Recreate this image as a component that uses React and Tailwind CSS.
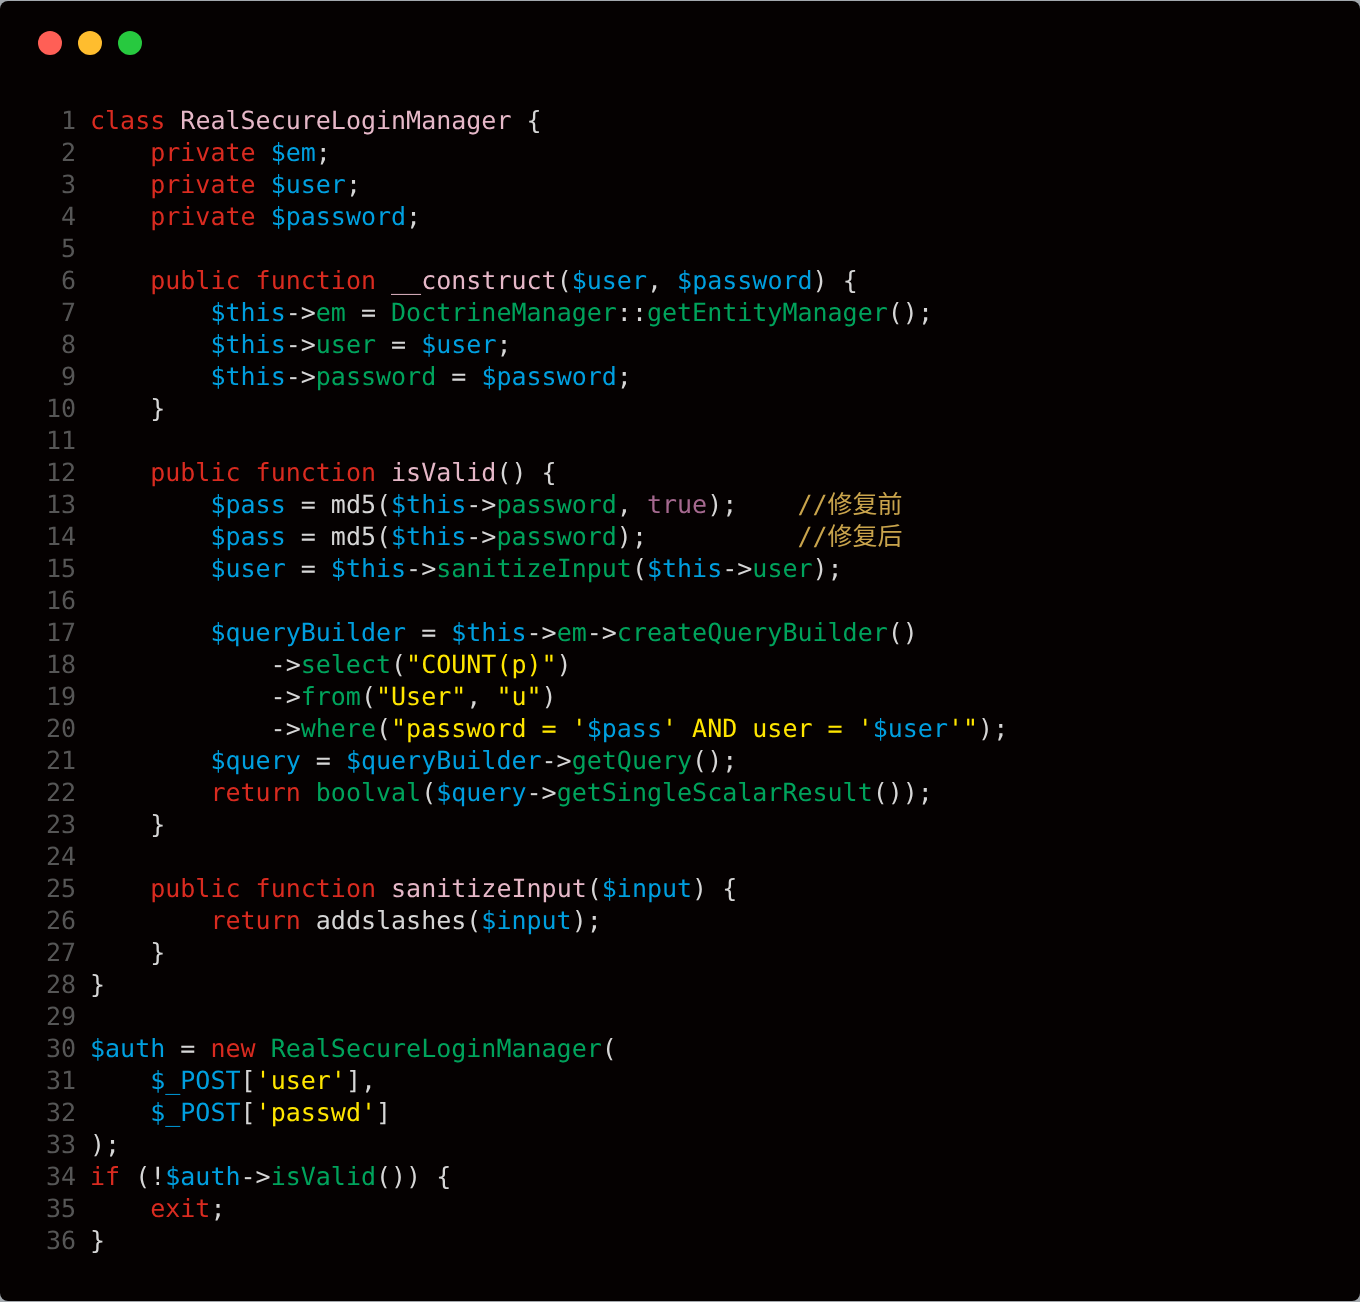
const K = "text-[#d92b20]";
const V = "text-[#009fdf]";
const F = "text-[#00a35c]";
const C = "text-[#e6b8c8]";
const S = "text-[#ffe600]";
const B = "text-[#a5698f]";
const M = "text-[#c9a44c]";
const P = "text-[#d6d6d6]";

const lines = [
  [[K, "class"], [P, " "], [C, "RealSecureLoginManager"], [P, " {"]],
  [[P, "    "], [K, "private"], [P, " "], [V, "$em"], [P, ";"]],
  [[P, "    "], [K, "private"], [P, " "], [V, "$user"], [P, ";"]],
  [[P, "    "], [K, "private"], [P, " "], [V, "$password"], [P, ";"]],
  [],
  [[P, "    "], [K, "public function"], [P, " "], [C, "__construct"], [P, "("], [V, "$user"], [P, ", "], [V, "$password"], [P, ") {"]],
  [[P, "        "], [V, "$this"], [P, "->"], [F, "em"], [P, " = "], [F, "DoctrineManager"], [P, "::"], [F, "getEntityManager"], [P, "();"]],
  [[P, "        "], [V, "$this"], [P, "->"], [F, "user"], [P, " = "], [V, "$user"], [P, ";"]],
  [[P, "        "], [V, "$this"], [P, "->"], [F, "password"], [P, " = "], [V, "$password"], [P, ";"]],
  [[P, "    }"]],
  [],
  [[P, "    "], [K, "public function"], [P, " "], [C, "isValid"], [P, "() {"]],
  [[P, "        "], [V, "$pass"], [P, " = md5("], [V, "$this"], [P, "->"], [F, "password"], [P, ", "], [B, "true"], [P, ");    "], [M, "//修复前"]],
  [[P, "        "], [V, "$pass"], [P, " = md5("], [V, "$this"], [P, "->"], [F, "password"], [P, ");          "], [M, "//修复后"]],
  [[P, "        "], [V, "$user"], [P, " = "], [V, "$this"], [P, "->"], [F, "sanitizeInput"], [P, "("], [V, "$this"], [P, "->"], [F, "user"], [P, ");"]],
  [],
  [[P, "        "], [V, "$queryBuilder"], [P, " = "], [V, "$this"], [P, "->"], [F, "em"], [P, "->"], [F, "createQueryBuilder"], [P, "()"]],
  [[P, "            ->"], [F, "select"], [P, "("], [S, '"COUNT(p)"'], [P, ")"]],
  [[P, "            ->"], [F, "from"], [P, "("], [S, '"User"'], [P, ", "], [S, '"u"'], [P, ")"]],
  [[P, "            ->"], [F, "where"], [P, "("], [S, "\"password = '"], [V, "$pass"], [S, "' AND user = '"], [V, "$user"], [S, "'\""], [P, ");"]],
  [[P, "        "], [V, "$query"], [P, " = "], [V, "$queryBuilder"], [P, "->"], [F, "getQuery"], [P, "();"]],
  [[P, "        "], [K, "return"], [P, " "], [F, "boolval"], [P, "("], [V, "$query"], [P, "->"], [F, "getSingleScalarResult"], [P, "());"]],
  [[P, "    }"]],
  [],
  [[P, "    "], [K, "public function"], [P, " "], [C, "sanitizeInput"], [P, "("], [V, "$input"], [P, ") {"]],
  [[P, "        "], [K, "return"], [P, " addslashes("], [V, "$input"], [P, ");"]],
  [[P, "    }"]],
  [[P, "}"]],
  [],
  [[V, "$auth"], [P, " = "], [K, "new"], [P, " "], [F, "RealSecureLoginManager"], [P, "("]],
  [[P, "    "], [V, "$_POST"], [P, "["], [S, "'user'"], [P, "],"]],
  [[P, "    "], [V, "$_POST"], [P, "["], [S, "'passwd'"], [P, "]"]],
  [[P, ");"]],
  [[K, "if"], [P, " (!"], [V, "$auth"], [P, "->"], [F, "isValid"], [P, "()) {"]],
  [[P, "    "], [K, "exit"], [P, ";"]],
  [[P, "}"]],
];

export default function App() {
  return (
    <div className="h-[1302px] w-[1360px] bg-[#a3a8ad] pt-px">
      <div className="h-[1300px] rounded-lg bg-[#050101] pt-[30px]">
        <div className="flex gap-4 pl-[38px]">
          <span className="h-6 w-6 rounded-full bg-[#ff5f56]" />
          <span className="h-6 w-6 rounded-full bg-[#ffbd2e]" />
          <span className="h-6 w-6 rounded-full bg-[#27c93f]" />
        </div>
        <div className="mt-[50px] font-['DejaVu_Sans_Mono','Noto_Sans_CJK_SC',monospace] text-[25px] leading-8 [text-rendering:geometricPrecision] will-change-transform">
          {lines.map((tokens, i) => (
            <div key={i} className="flex h-8">
              <span className="w-[76px] shrink-0 text-right text-[#565656]">{i + 1}</span>
              <code className="ml-[14px] whitespace-pre font-['DejaVu_Sans_Mono','Noto_Sans_CJK_SC',monospace]">
                {tokens.map(([color, text], j) => (
                  <span key={j} className={color}>{text}</span>
                ))}
              </code>
            </div>
          ))}
        </div>
      </div>
    </div>
  );
}
